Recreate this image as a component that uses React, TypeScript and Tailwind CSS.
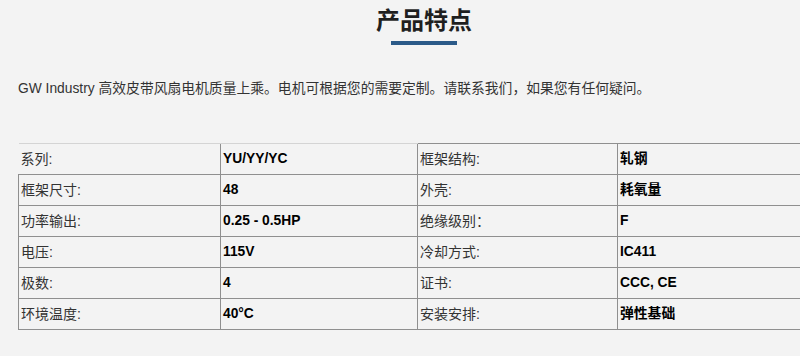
import React from 'react';

const rows: [string, string, string, string][] = [
  ['系列:', 'YU/YY/YC', '框架结构:', '轧钢'],
  ['框架尺寸:', '48', '外壳:', '耗氧量'],
  ['功率输出:', '0.25 - 0.5HP', '绝缘级别：', 'F'],
  ['电压:', '115V', '冷却方式:', 'IC411'],
  ['极数:', '4', '证书:', 'CCC, CE'],
  ['环境温度:', '40°C', '安装安排:', '弹性基础'],
];

export default function App() {
  return (
    <div
      className="w-[800px] h-[356px] overflow-hidden bg-[#f3f3f3] text-[#222]"
      style={{ fontFamily: '"Liberation Sans", "Noto Sans CJK SC", sans-serif' }}
    >
      <div className="w-[848px] px-[18px]">
        <h2 className="pt-[5px] text-center text-[24px] leading-[32px] font-bold text-[#1f1f1f]">产品特点</h2>
        <div className="mx-auto mt-[4px] h-[4px] w-[66px] bg-[#2b5a88]" />

        <p className="mt-[34px] text-[13.8px] leading-[20px] text-[#333]">
          GW Industry 高效皮带风扇电机质量上乘。电机可根据您的需要定制。请联系我们，如果您有任何疑问。
        </p>

        <table className="mt-[44px] w-[812px] table-fixed border-collapse text-[14px]">
          <colgroup>
            <col className="w-[202px]" />
            <col className="w-[197px]" />
            <col className="w-[200px]" />
            <col className="w-[213px]" />
          </colgroup>
          <tbody>
            {rows.map((r, i) => (
              <tr key={i} className="h-[31px]">
                <td
                  className={
                    i === 0
                      ? 'border-t border-t-[#d4d4d4] px-[2px] text-[#333]'
                      : 'border border-[#8f8f8f] px-[2px] text-[#333]'
                  }
                >
                  {r[0]}
                </td>
                <td
                  className={
                    i === 0
                      ? 'border-l border-b border-[#8f8f8f] border-t-[#d4d4d4] border-t px-[2px] text-[13.8px] font-bold text-black'
                      : 'border border-[#8f8f8f] px-[2px] text-[13.8px] font-bold text-black'
                  }
                >
                  {r[1]}
                </td>
                <td className="border border-[#8f8f8f] px-[2px] text-[#333]">{r[2]}</td>
                <td className="border border-[#8f8f8f] px-[2px] text-[13.8px] font-bold text-black">{r[3]}</td>
              </tr>
            ))}
          </tbody>
        </table>
      </div>
    </div>
  );
}
